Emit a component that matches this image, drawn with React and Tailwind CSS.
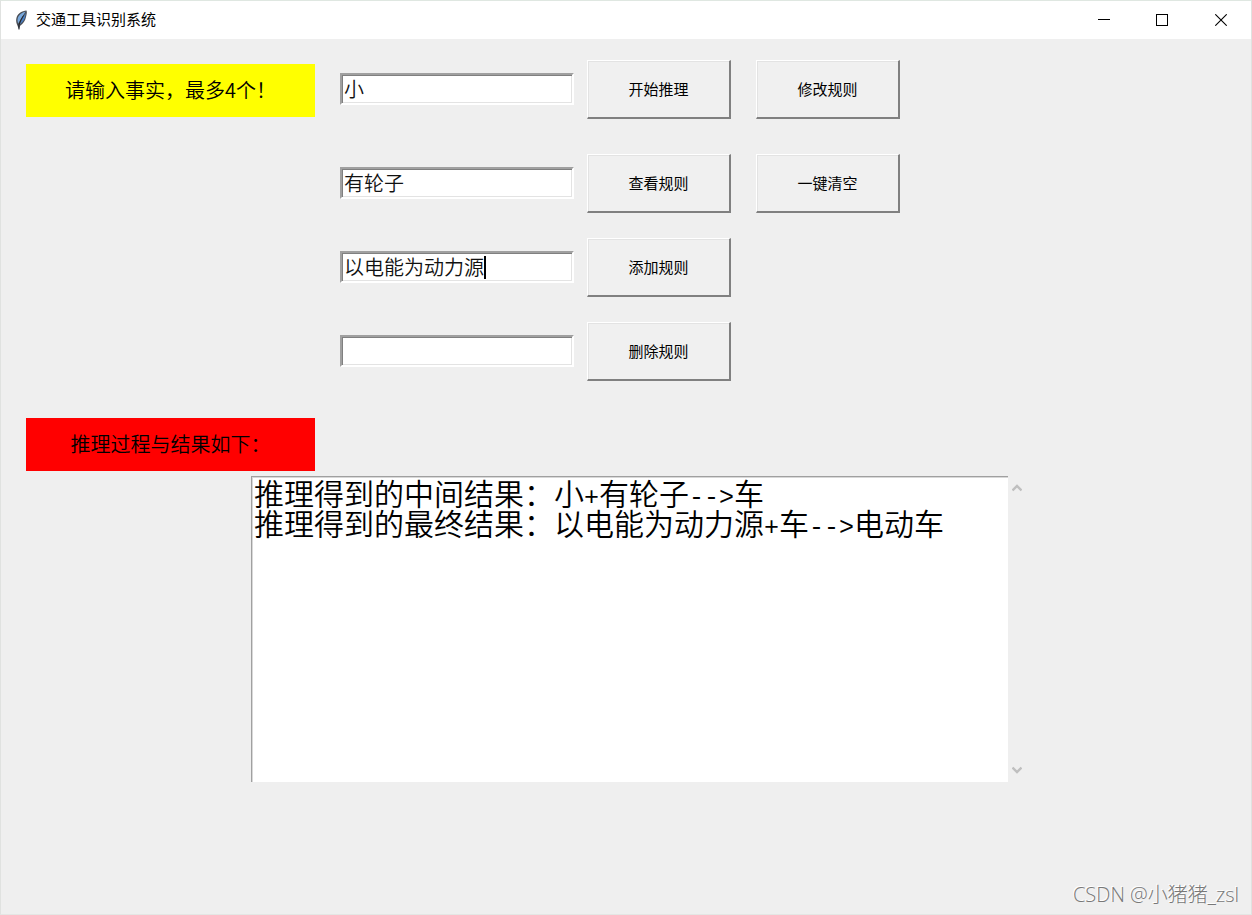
const ROWS = [
  { fact: '小', actions: ['开始推理', '修改规则'], spacing: 'mb-[34px]' },
  { fact: '有轮子', actions: ['查看规则', '一键清空'], spacing: 'mb-6' },
  { fact: '以电能为动力源', actions: ['添加规则'], spacing: 'mb-6', caret: true },
  { fact: '', actions: ['删除规则'], spacing: '' },
];

function Feather() {
  return (
    <svg width="16" height="20" viewBox="0 0 16 20" aria-hidden="true">
      <path d="M13.500 0.500 C9 0.800 5 3.500 3.700 7 C2.800 9.500 3 12 4 14.500 L6 19.500 L7.200 15.800 C10.200 13.800 12.200 10.800 13 7 C13.500 4.500 14.300 2.500 13.500 0.500Z" fill="#4a4e56" />
      <path d="M12.600 1.400 C9 2.300 5.600 5 4.800 8 C4.300 10 4.500 11.500 5.200 13.500 C7.500 9.500 9.800 5.500 12.600 1.400Z" fill="#78a8dc" />
      <path d="M12.800 3 C10.500 6.500 8.500 10 6.600 14.200 C9.600 12.500 11.400 9.800 12.100 7 Z" fill="#4a80c4" />
      <path d="M10.500 5.500 C8.500 8.500 7 11.500 5.900 15 L6 19.500" fill="none" stroke="#181c24" strokeWidth="0.900" />
    </svg>
  );
}

function Caption({ className, children }) {
  return <div className={`flex h-[53px] w-[289px] items-center justify-center pb-0.5 text-xl leading-5 font-[350] ${className}`}>{children}</div>;
}

function FactInput({ value, caret, index }) {
  return (
    <div className="relative w-[234px]">
      <input
        aria-label={`事实${index + 1}`}
        defaultValue={value}
        className="block h-8 w-full border-2 border-t-[#a0a0a0] border-r-white border-b-white border-l-[#a0a0a0] bg-white pb-0.5 pl-0.5 text-xl leading-5 font-[350] text-[#111] shadow-[inset_1px_1px_0_#808080,inset_-1px_-1px_0_#e3e3e3] outline-none"
      />
      {caret && <span className="absolute top-[5px] left-36 h-[23px] w-0.5 bg-black" />}
    </div>
  );
}

function ActionButton({ children }) {
  return (
    <button className="h-[59px] w-36 border-t border-r-2 border-b-2 border-l border-t-white border-r-[#808080] border-b-[#808080] border-l-white bg-[#f0f0f0] text-[15px] leading-5 text-black shadow-[inset_1px_1px_0_#e3e3e3]">
      {children}
    </button>
  );
}

function Ascii({ children }) {
  return <span className="font-['Liberation_Mono',monospace] text-[25px] leading-[0]">{children}</span>;
}

export default function App() {
  return (
    <main className="flex min-h-screen flex-col border border-t-[#dfe7e1] border-r-[#e0e2e0] border-b-[#e4e6e4] border-l-[#e0e2e0] bg-[#efefef] font-['Noto_Sans_CJK_SC',sans-serif] text-black">
      <header className="flex h-[38px] items-center bg-white">
        <div className="flex flex-1 items-center gap-[7px] pl-3">
          <Feather />
          <h1 className="pb-0.5 text-[15px] leading-5">交通工具识别系统</h1>
        </div>
        <button aria-label="最小化" className="flex h-full w-[58px] items-center justify-center">
          <svg width="12" height="12" shapeRendering="crispEdges"><path d="M0 5.500H12" stroke="#000" /></svg>
        </button>
        <button aria-label="最大化" className="flex h-full w-[58px] items-center justify-center">
          <svg width="12" height="12" shapeRendering="crispEdges"><rect x="0.5" y="0.5" width="11" height="11" fill="none" stroke="#000" /></svg>
        </button>
        <button aria-label="关闭" className="flex h-full w-[60px] items-center justify-center">
          <svg width="12" height="12"><path d="M0.300 0.300L11.700 11.700M11.700 0.300L0.300 11.700" stroke="#000" strokeWidth="1.100" /></svg>
        </button>
      </header>

      <section className="flex pt-5 pl-[25px]">
        <div className="w-[314px] pt-[5px]">
          <Caption className="bg-[#ffff00]">请输入事实，最多4个！</Caption>
        </div>
        <div className="flex flex-col">
          {ROWS.map((row, i) => (
            <div key={i} className={`flex h-[60px] items-center ${row.spacing}`}>
              <FactInput value={row.fact} caret={row.caret} index={i} />
              <div className="ml-[13px] flex gap-[25px]">
                {row.actions.map((a) => <ActionButton key={a}>{a}</ActionButton>)}
              </div>
            </div>
          ))}
        </div>
      </section>

      <div className="mt-[37px] pl-[25px]">
        <Caption className="bg-[#ff0000]">推理过程与结果如下：</Caption>
      </div>

      <section className="mt-[5px] ml-[250px] flex h-[306px] w-[775px]">
        <div role="log" className="flex-1 border-t border-l border-t-[#a0a0a0] border-l-[#a0a0a0] bg-white pl-0.5 text-3xl leading-[30px] font-[350] shadow-[inset_1px_1px_0_#d8d8d8]">
          <p>推理得到的中间结果：小<Ascii>+</Ascii>有轮子<Ascii>--&gt;</Ascii>车</p>
          <p>推理得到的最终结果：以电能为动力源<Ascii>+</Ascii>车<Ascii>--&gt;</Ascii>电动车</p>
        </div>
        <div className="flex w-[18px] flex-col items-center justify-between py-2">
          <svg width="10" height="8" aria-hidden="true"><path d="M0.500 6.500L5 2L9.500 6.500" fill="none" stroke="#bfbfbf" strokeWidth="2.400" /></svg>
          <svg width="10" height="8" aria-hidden="true"><path d="M0.500 1.500L5 6L9.500 1.500" fill="none" stroke="#bfbfbf" strokeWidth="2.400" /></svg>
        </div>
      </section>

      <footer className="mt-auto self-end pr-3 pb-[7px] font-['Open_Sans','Noto_Sans_CJK_SC',sans-serif] text-xl leading-6 font-light text-[#787878] [text-shadow:-1px_-1px_0_#fff]">CSDN @小猪猪_zsl</footer>
    </main>
  );
}
